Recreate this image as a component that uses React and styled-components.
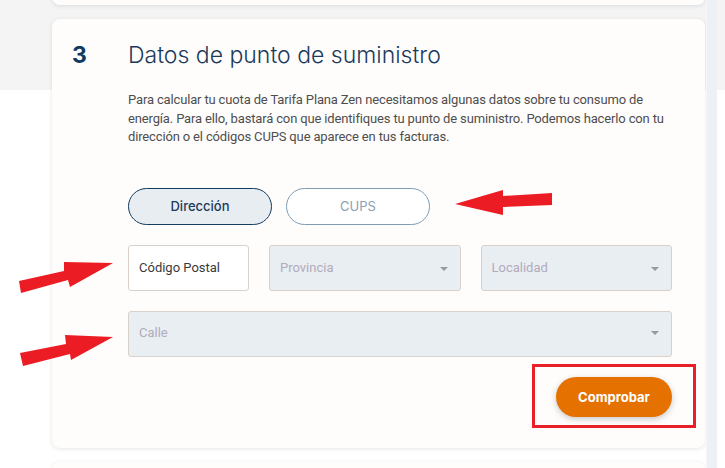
import styled, { createGlobalStyle } from 'styled-components';

const GlobalStyle = createGlobalStyle`
  html, body {
    margin: 0;
    padding: 0;
  }
  body {
    background: #ffffff;
    font-family: Roboto, "Noto Sans", sans-serif;
  }
  * {
    box-sizing: border-box;
  }
`;

const Page = styled.div`
  position: relative;
  width: 725px;
  height: 468px;
  overflow: hidden;
  display: grid;
  grid-template-columns: 52px 653px 1px 11px 1fr;
  background: linear-gradient(to bottom, #f4f4f4 0, #f4f4f4 90px, #ffffff 90px);
`;

const Main = styled.div`
  grid-column: 2;
  display: flex;
  flex-direction: column;
  gap: 14px;
  margin-top: -20px;
`;

const SideStrip = styled.div`
  grid-column: 4;
  background: #edf1f5;
  border-left: 1px solid #f4f6f9;
`;

const Card = styled.section`
  background: #fefdfc;
  border-radius: 8px;
  box-shadow: 0 1px 4px rgba(40, 50, 70, 0.12);
  flex-shrink: 0;
`;

const StubCard = styled(Card)`
  height: 25px;
`;

const StepCard = styled(Card)`
  height: 429px;
  padding: 21px 33px 20px 20px;
  display: flex;
  flex-direction: column;
`;

const NextCard = styled(Card)`
  height: 40px;
`;

const Header = styled.div`
  display: flex;
  align-items: center;
  height: 30px;
`;

const StepNumber = styled.div`
  width: 56px;
  font-family: Inter, sans-serif;
  font-weight: 700;
  font-size: 23px;
  color: #0f3a60;
`;

const Title = styled.h2`
  margin: 0;
  font-family: Inter, sans-serif;
  font-weight: 300;
  font-size: 23px;
  color: #1b3a5b;
`;

const Body = styled.div`
  padding-left: 56px;
  display: flex;
  flex-direction: column;
`;

const Intro = styled.p`
  margin: 21px 0 0;
  font-size: 13px;
  line-height: 18.5px;
  color: #4e4e4e;
  letter-spacing: -0.15px;
`;

const Tabs = styled.div`
  display: flex;
  gap: 14px;
  margin-top: 41px;
`;

const Tab = styled.button`
  width: 144px;
  height: 37px;
  border-radius: 19px;
  font-family: Inter, sans-serif;
  font-size: 13px;
  font-weight: ${(p) => (p.$active ? 500 : 400)};
  color: ${(p) => (p.$active ? '#1d3a5a' : '#8ba0b4')};
  background: ${(p) => (p.$active ? '#e8edf2' : '#ffffff')};
  border: 1px solid ${(p) => (p.$active ? '#123c60' : '#7f9cb3')};
  cursor: pointer;
`;

const FieldRow = styled.div`
  display: grid;
  grid-template-columns: ${(p) => p.$cols};
  gap: 20px;
  margin-top: 20px;
`;

const Field = styled.div`
  position: relative;
  height: 46px;
  display: flex;
  padding: 0 10px;
  border: 1px solid #d9d1c9;
  border-radius: 3px;
  background: ${(p) => (p.$disabled ? '#e9eef3' : '#ffffff')};
  font-size: 13px;
  color: ${(p) => (p.$disabled ? '#b2abbb' : '#3a3a3a')};
  align-items: ${(p) => (p.$top ? 'flex-start' : 'center')};
  padding-top: ${(p) => (p.$top ? '13px' : '0')};
`;

const Caret = styled.span`
  position: absolute;
  right: 12px;
  top: ${(p) => (p.$top ? '19px' : '21px')};
  width: 0;
  height: 0;
  border-left: 4px solid transparent;
  border-right: 4px solid transparent;
  border-top: 4px solid #9a9a9a;
`;

const Actions = styled.div`
  display: flex;
  justify-content: flex-end;
  margin-top: 7px;
  margin-right: -24px;
`;

const Highlight = styled.div`
  border: 3px solid #e8202a;
  padding: 10px 21px 8px 21px;
`;

const SubmitButton = styled.button`
  width: 116px;
  height: 40px;
  border: none;
  border-radius: 20px;
  background: #e57200;
  color: #ffffff;
  font-family: Inter, sans-serif;
  font-weight: 700;
  font-size: 13px;
  box-shadow: 0 2px 6px rgba(0, 0, 0, 0.22);
  cursor: pointer;
`;

const Annotations = styled.svg`
  position: absolute;
  left: 0;
  top: 0;
  pointer-events: none;
`;

const Select = ({ label, top }) => (
  <Field $disabled $top={top}>
    {label}
    <Caret $top={top} />
  </Field>
);

export default function App() {
  return (
    <>
      <GlobalStyle />
      <Page>
        <Main>
          <StubCard />
          <StepCard>
            <Header>
              <StepNumber>3</StepNumber>
              <Title>Datos de punto de suministro</Title>
            </Header>
            <Body>
              <Intro>
                Para calcular tu cuota de Tarifa Plana Zen necesitamos algunas datos sobre tu consumo de
                energía. Para ello, bastará con que identifiques tu punto de suministro. Podemos hacerlo con tu
                dirección o el códigos CUPS que aparece en tus facturas.
              </Intro>
              <Tabs>
                <Tab $active>Dirección</Tab>
                <Tab>CUPS</Tab>
              </Tabs>
              <FieldRow $cols="121px 1fr 1fr">
                <Field>Código Postal</Field>
                <Select label="Provincia" />
                <Select label="Localidad" />
              </FieldRow>
              <FieldRow $cols="1fr">
                <Select label="Calle" top />
              </FieldRow>
              <Actions>
                <Highlight>
                  <SubmitButton>Comprobar</SubmitButton>
                </Highlight>
              </Actions>
            </Body>
          </StepCard>
          <NextCard />
        </Main>
        <SideStrip />
        <Annotations width="725" height="468" viewBox="0 0 725 468">
          <g fill="#ec1c24">
            <polygon points="455,204 503,190 503,196 552,193 552,205 503,207 503,215" />
            <polygon points="19,281 64,271 64,262 113,263 70,287 68,280 21,293" />
            <polygon points="20,353 66,344 65,335 113,337 71,360 70,354 23,366" />
          </g>
        </Annotations>
      </Page>
    </>
  );
}
